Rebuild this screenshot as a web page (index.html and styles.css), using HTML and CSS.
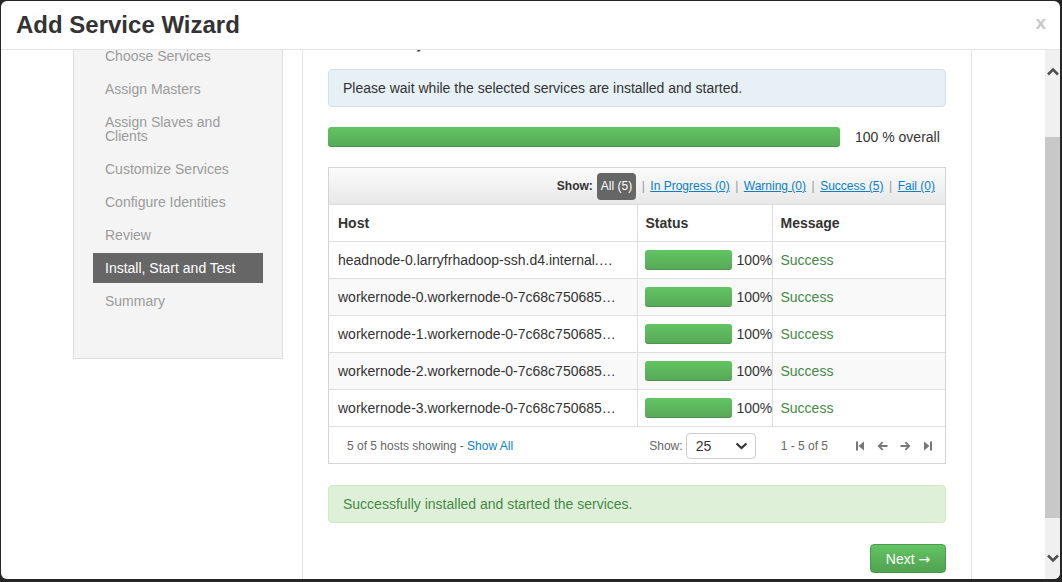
FILE: index.html
```
<!DOCTYPE html>
<html>
<head>
<meta charset="utf-8">
<link rel="stylesheet" href="styles.css">
</head>
<body>
<div class="modal">
  <div class="modal-header">
    <h1 class="title">Add Service Wizard</h1>
    <span class="close">x</span>
  </div>
  <div class="modal-body">
    <div class="scroll-content">
      <div class="wizard">
        <div class="nav-col">
          <ul class="nav-panel">
            <li>Choose Services</li>
            <li>Assign Masters</li>
            <li>Assign Slaves and Clients</li>
            <li>Customize Services</li>
            <li>Configure Identities</li>
            <li>Review</li>
            <li class="active">Install, Start and Test</li>
            <li>Summary</li>
          </ul>
        </div>
        <div class="main-col">
          <h2 class="step-title">Install, Start and Test</h2>
          <div class="alert alert-info">Please wait while the selected services are installed and started.</div>
          <div class="overall">
            <div class="bar big"></div>
            <span class="overall-text">100 % overall</span>
          </div>
          <div class="hosts-box">
            <div class="toolbar">
              <span class="show-label">Show:</span>
              <span class="pill">All (5)</span>
              <span class="sep">|</span><a class="link">In Progress (0)</a>
              <span class="sep">|</span><a class="link">Warning (0)</a>
              <span class="sep">|</span><a class="link">Success (5)</a>
              <span class="sep">|</span><a class="link">Fail (0)</a>
            </div>
            <table class="hosts">
              <colgroup><col class="c-host"><col class="c-status"><col class="c-msg"></colgroup>
              <thead>
                <tr><th>Host</th><th>Status</th><th>Message</th></tr>
              </thead>
              <tbody>
                <tr><td><div class="host">headnode-0.larryfrhadoop-ssh.d4.internal.cloudapp.net</div></td><td><div class="status"><div class="bar small"></div><span>100%</span></div></td><td class="ok">Success</td></tr>
                <tr class="odd"><td><div class="host">workernode-0.workernode-0-7c68c750685a.d4.internal.cloudapp.net</div></td><td><div class="status"><div class="bar small"></div><span>100%</span></div></td><td class="ok">Success</td></tr>
                <tr><td><div class="host">workernode-1.workernode-0-7c68c750685a.d4.internal.cloudapp.net</div></td><td><div class="status"><div class="bar small"></div><span>100%</span></div></td><td class="ok">Success</td></tr>
                <tr class="odd"><td><div class="host">workernode-2.workernode-0-7c68c750685a.d4.internal.cloudapp.net</div></td><td><div class="status"><div class="bar small"></div><span>100%</span></div></td><td class="ok">Success</td></tr>
                <tr><td><div class="host">workernode-3.workernode-0-7c68c750685a.d4.internal.cloudapp.net</div></td><td><div class="status"><div class="bar small"></div><span>100%</span></div></td><td class="ok">Success</td></tr>
              </tbody>
              <tfoot>
                <tr><td colspan="3">
                  <div class="tfoot">
                    <span class="showing">5 of 5 hosts showing - <a class="link plain">Show All</a></span>
                    <div class="pager">
                      <span class="muted">Show:</span>
                      <div class="select"><span>25</span>
                        <svg width="13" height="8" viewBox="0 0 13 8"><path d="M1.5 1.5 L6.5 6 L11.5 1.5" fill="none" stroke="#333" stroke-width="2.2"/></svg>
                      </div>
                      <span class="muted range">1 - 5 of 5</span>
                      <div class="pg-icons">
                        <svg width="9" height="10" viewBox="0 0 9 10"><rect x="0" y="0.5" width="2" height="9" fill="#777"/><path d="M8 0.5 L8 9.5 L2.5 5 Z" fill="#777"/></svg>
                        <svg width="11" height="10" viewBox="0 0 11 10"><path d="M5 0.5 L0.5 5 L5 9.5 L6.3 8.2 L4 6 L10.5 6 L10.5 4 L4 4 L6.3 1.8 Z" fill="#777"/></svg>
                        <svg width="11" height="10" viewBox="0 0 11 10"><path d="M6 0.5 L10.5 5 L6 9.5 L4.7 8.2 L7 6 L0.5 6 L0.5 4 L7 4 L4.7 1.8 Z" fill="#777"/></svg>
                        <svg width="9" height="10" viewBox="0 0 9 10"><path d="M1 0.5 L1 9.5 L6.5 5 Z" fill="#777"/><rect x="7" y="0.5" width="2" height="9" fill="#777"/></svg>
                      </div>
                    </div>
                  </div>
                </td></tr>
              </tfoot>
            </table>
          </div>
          <div class="alert alert-success">Successfully installed and started the services.</div>
          <div class="actions"><button class="btn-next">Next <span class="arrow">&rarr;</span></button></div>
        </div>
      </div>
    </div>
    <div class="scrollbar">
      <svg class="sb-up" width="12" height="9" viewBox="0 0 12 9"><path d="M1 7.5 L6 2.5 L11 7.5" fill="none" stroke="#505050" stroke-width="2.6"/></svg>
      <div class="sb-thumb"></div>
      <svg class="sb-down" width="12" height="9" viewBox="0 0 12 9"><path d="M1 1.5 L6 6.5 L11 1.5" fill="none" stroke="#505050" stroke-width="2.6"/></svg>
    </div>
  </div>
</div>
</body>
</html>
```

FILE: styles.css
```
* { box-sizing: border-box; }
html, body { margin: 0; height: 100%; }
body {
  background: #262626;
  padding: 1px 2px 3px 1px;
  font-family: "Liberation Sans", Arial, sans-serif;
  font-size: 14px;
  color: #333;
  overflow: hidden;
}
.modal {
  width: 1059px;
  height: 578px;
  background: #fff;
  border-radius: 6px;
  overflow: hidden;
  display: flex;
  flex-direction: column;
}
.modal-header {
  height: 49px;
  flex: none;
  border-bottom: 1px solid #e5e5e5;
  display: flex;
  justify-content: space-between;
  align-items: flex-start;
  padding: 0 14px 0 15px;
}
.title {
  margin: 0;
  font-size: 24px;
  line-height: 48px;
  font-weight: bold;
  color: #333;
}
.close {
  margin-top: 12px;
  font-size: 19px;
  line-height: 20px;
  font-weight: bold;
  color: #c8c8c8;
}
.modal-body {
  flex: 1;
  display: flex;
  overflow: hidden;
}
.scroll-content {
  flex: 1;
  overflow: hidden;
}
.wizard {
  display: flex;
  align-items: flex-start;
  margin-top: -30px;
  padding-left: 72px;
}
.nav-col {
  width: 210px;
  margin-right: 19px;
  flex: none;
}
.nav-panel {
  list-style: none;
  margin: 0;
  background: #f4f4f4;
  border: 1px solid #dedede;
  padding: 20px 19px 39px 19px;
}
.nav-panel li {
  padding: 8px 12px;
  line-height: 14px;
  margin-bottom: 3px;
  color: #9b9b9b;
  font-size: 14px;
}
.nav-panel li.active {
  background: #666;
  color: #fff;
}
.main-col {
  width: 670px;
  flex: none;
  min-height: 640px;
  border-left: 1px solid #e4e4e4;
  border-right: 1px solid #e4e4e4;
  padding: 0 25px;
}
.step-title {
  margin: -3px 0 0 0;
  font-size: 30px;
  line-height: 40px;
  font-weight: bold;
  color: #333;
}
.alert {
  margin-top: 12px;
  border: 1px solid;
  border-radius: 4px;
  padding: 8px 14px;
  line-height: 20px;
}
.alert-info {
  background: #e6f0f5;
  border-color: #d3e2ea;
  color: #333;
}
.alert-success {
  margin-top: 21px;
  background: #dff0d8;
  border-color: #d6e9c6;
  color: #468847;
}
.overall {
  display: flex;
  align-items: center;
  margin-top: 20px;
}
.bar {
  background: linear-gradient(#62c462, #57a957);
  box-shadow: inset 0 -1px 0 rgba(0,0,0,0.12);
  border-radius: 3px;
}
.bar.big {
  width: 512px;
  height: 20px;
  flex: none;
}
.overall-text {
  margin-left: 15px;
  line-height: 20px;
}
.hosts-box {
  margin-top: 20px;
  border: 1px solid #d4d4d4;
}
.toolbar {
  height: 36px;
  display: flex;
  align-items: center;
  justify-content: flex-end;
  padding-right: 10px;
  background: linear-gradient(#fbfbfb, #e8e8e8);
  font-size: 12px;
}
.show-label {
  font-weight: bold;
  margin-right: 4px;
}
.pill {
  background: #666;
  color: #fff;
  border-radius: 4px;
  height: 27px;
  line-height: 27px;
  padding: 0 4px;
}
.sep {
  color: #999;
  margin: 0 5.5px;
}
.link {
  color: #0a7fc6;
  text-decoration: underline;
}
.link.plain { text-decoration: none; }
.hosts {
  width: 100%;
  border-collapse: collapse;
  table-layout: fixed;
}
.c-host { width: 308px; }
.c-status { width: 135px; }
.hosts th, .hosts td {
  border: 1px solid #dddddd;
  padding: 8px 8px;
  line-height: 20px;
  text-align: left;
  vertical-align: middle;
}
.hosts th {
  font-weight: bold;
}
.hosts tr > :first-child { border-left: none; padding-left: 9px; }
.hosts tr > :last-child { border-right: none; }
.hosts tbody tr.odd td { background: #f9f9f9; }
.host {
  width: 279px;
  white-space: nowrap;
  overflow: hidden;
  text-overflow: ellipsis;
}
.status {
  display: flex;
  align-items: center;
  white-space: nowrap;
  margin-left: -1px;
}
.bar.small {
  width: 87px;
  height: 20px;
  flex: none;
  margin-right: 5px;
}
.ok { color: #468847; }
.hosts tfoot td {
  padding: 5px 13px 4px 18px;
  border-bottom: none;
}
.hosts tfoot tr > :first-child { padding-left: 18px; }
.tfoot {
  display: flex;
  align-items: center;
  justify-content: space-between;
  font-size: 12px;
  height: 27px;
}
.showing { color: #666; }
.pager {
  display: flex;
  align-items: center;
}
.muted { color: #666; }
.select {
  width: 70px;
  height: 26px;
  margin-left: 3px;
  border: 1px solid #cccccc;
  border-radius: 4px;
  display: flex;
  align-items: center;
  justify-content: space-between;
  padding: 0 7px 0 9px;
  font-size: 14px;
  color: #333;
}
.range { margin-left: 25px; }
.pg-icons {
  display: flex;
  align-items: center;
  gap: 12px;
  margin-left: 28px;
}
.actions {
  display: flex;
  justify-content: flex-end;
  margin-top: 21px;
}
.btn-next {
  width: 76px;
  height: 29px;
  background: linear-gradient(#62c462, #51a351);
  border: 1px solid #4b9a4b;
  border-radius: 4px;
  color: #fff;
  font-family: "Liberation Sans", Arial, sans-serif;
  font-size: 14px;
  padding: 0;
}
.arrow {
  font-family: "DejaVu Sans", sans-serif;
  font-size: 14px;
}
.scrollbar {
  width: 15px;
  flex: none;
  background: #f0f0f0;
  display: flex;
  flex-direction: column;
  align-items: center;
}
.sb-up { margin-top: 17px; flex: none; }
.sb-thumb {
  width: 15px;
  height: 381px;
  background: #c8c8c8;
  margin-top: 61px;
  flex: none;
}
.sb-down { margin-top: auto; margin-bottom: 16px; flex: none; }
```
